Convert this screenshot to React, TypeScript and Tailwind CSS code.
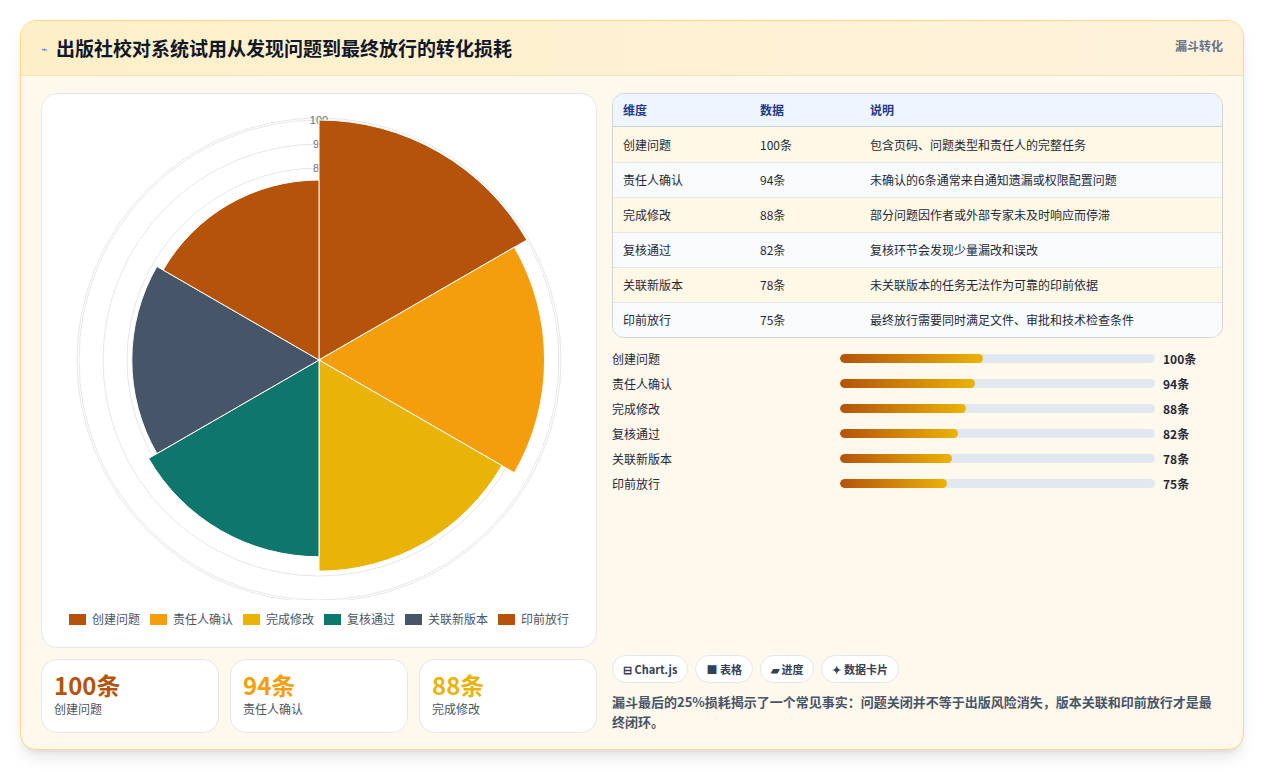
import React from "react";

const data = [
  { n: "创建问题", v: 100, c: "#b45309", d: "包含页码、问题类型和责任人的完整任务" },
  { n: "责任人确认", v: 94, c: "#f59e0b", d: "未确认的6条通常来自通知遗漏或权限配置问题" },
  { n: "完成修改", v: 88, c: "#eab308", d: "部分问题因作者或外部专家未及时响应而停滞" },
  { n: "复核通过", v: 82, c: "#0f766e", d: "复核环节会发现少量漏改和误改" },
  { n: "关联新版本", v: 78, c: "#475569", d: "未关联版本的任务无法作为可靠的印前依据" },
  { n: "印前放行", v: 75, c: "#b45309", d: "最终放行需要同时满足文件、审批和技术检查条件" },
];

function Polar() {
  const cx = 278, cy = 260, k = 2.4;
  const pt = (r: number, a: number) => [cx + r * Math.cos((a * Math.PI) / 180), cy + r * Math.sin((a * Math.PI) / 180)];
  return (
    <svg width="556" height="500" viewBox="0 0 556 500">
      {[242, 240, 216, 192, 168, 144].map((r) => (
        <circle key={r} cx={cx} cy={cy} r={r} fill="none" stroke="#e5e7eb" strokeWidth="1" />
      ))}
      {["100", "90", "80"].map((t, i) => (
        <text key={t} x={cx} y={cy - 240 + i * 24 + 4} textAnchor="middle" fontSize="11" fill="#6b7280" fontFamily="Liberation Sans, sans-serif">{t}</text>
      ))}
      {data.map((s, i) => {
        const r = s.v * k;
        const a0 = -90 + i * 60, a1 = a0 + 60;
        const [x0, y0] = pt(r, a0), [x1, y1] = pt(r, a1);
        return <path key={i} d={`M${cx},${cy} L${x0},${y0} A${r},${r} 0 0 1 ${x1},${y1} Z`} fill={s.c} stroke="#fff" strokeWidth="1" />;
      })}
    </svg>
  );
}

export default function App() {
  const f = { fontFamily: '"Noto Sans CJK SC", "Liberation Sans", sans-serif' };
  return (
    <div className="w-[1264px] h-[772px] bg-white p-5 pb-[22px]" style={f}>
      <div className="h-full rounded-2xl border border-[#fcd68a] bg-[#fff8ec] shadow-lg overflow-hidden flex flex-col">
        <div className="h-[55px] shrink-0 flex items-center justify-between px-5 bg-gradient-to-r from-[#fdf0c8] to-[#fff2dc] border-b border-[#f6e2b8]">
          <div className="flex items-center gap-2">
            <span className="text-[11px] text-[#3b82f6]">⌁</span>
            <span className="text-[19px] font-bold text-[#111827]">出版社校对系统试用从发现问题到最终放行的转化损耗</span>
          </div>
          <span className="text-[12px] font-semibold text-[#64748b] self-start mt-4">漏斗转化</span>
        </div>
        <div className="flex gap-[15px] px-5 pt-[17px]">
          <div className="w-[556px] flex flex-col gap-[11px]">
            <div className="h-[555px] bg-white rounded-2xl border border-[#e5e7eb] flex flex-col items-center pt-[6px]">
              <Polar />
              <div className="flex gap-[10px] mt-[10px] text-[12px] text-[#4b5563]">
                {data.map((s, i) => (
                  <div key={i} className="flex items-center gap-[6px]">
                    <span className="w-[17px] h-[11px]" style={{ background: s.c }} />
                    {s.n}
                  </div>
                ))}
              </div>
            </div>
            <div className="flex gap-[11px]">
              {data.slice(0, 3).map((s, i) => (
                <div key={i} className="flex-1 h-[74px] bg-white rounded-2xl border border-[#e5e7eb] px-3 pt-[10px]">
                  <div className="text-[24px] font-bold leading-[30px]" style={{ color: s.c }}>{s.v}条</div>
                  <div className="text-[12px] text-[#4b5563]">{s.n}</div>
                </div>
              ))}
            </div>
          </div>
          <div className="flex-1 flex flex-col">
            <div className="rounded-xl border border-[#d1d5db] overflow-hidden text-[12px]">
              <div className="flex h-[33px] items-center bg-[#eef5fe] border-b border-[#cbd5e1] text-[#1e3a8a] font-semibold">
                <div className="w-[147px] pl-[10px]">维度</div>
                <div className="w-[110px]">数据</div>
                <div>说明</div>
              </div>
              {data.map((s, i) => (
                <div key={i} className={`flex h-[35px] items-center text-[#1f2937] ${i > 0 ? "border-t border-[#e5e7eb]" : ""} ${i % 2 ? "bg-[#f8fafc]" : "bg-[#fff8e6]"}`}>
                  <div className="w-[147px] pl-[10px]">{s.n}</div>
                  <div className="w-[110px]">{s.v}条</div>
                  <div>{s.d}</div>
                </div>
              ))}
            </div>
            <div className="mt-[8px] flex flex-col">
              {data.map((s, i) => (
                <div key={i} className="h-[25px] flex items-center text-[12px] text-[#1f2937]">
                  <div className="w-[228px]">{s.n}</div>
                  <div className="w-[315px] h-[9px] rounded-full bg-[#e2e8f0] overflow-hidden">
                    <div className="h-full rounded-full bg-gradient-to-r from-[#b45309] to-[#eab308]" style={{ width: `${s.v * 0.455}%` }} />
                  </div>
                  <div className="ml-2 font-semibold">{s.v}条</div>
                </div>
              ))}
            </div>
            <div className="mt-[159px] flex gap-[7px] text-[11px] font-semibold text-[#334155]">
              {["⊟ Chart.js", "■ 表格", "▰ 进度", "✦ 数据卡片"].map((t) => (
                <div key={t} className="h-[28px] px-[10px] flex items-center rounded-full bg-white border border-[#e5e7eb]">{t}</div>
              ))}
            </div>
            <div className="mt-[9px] text-[13px] leading-[20px] font-semibold text-[#475569]">
              漏斗最后的25%损耗揭示了一个常见事实：问题关闭并不等于出版风险消失，版本关联和印前放行才是最终闭环。
            </div>
          </div>
        </div>
      </div>
    </div>
  );
}
